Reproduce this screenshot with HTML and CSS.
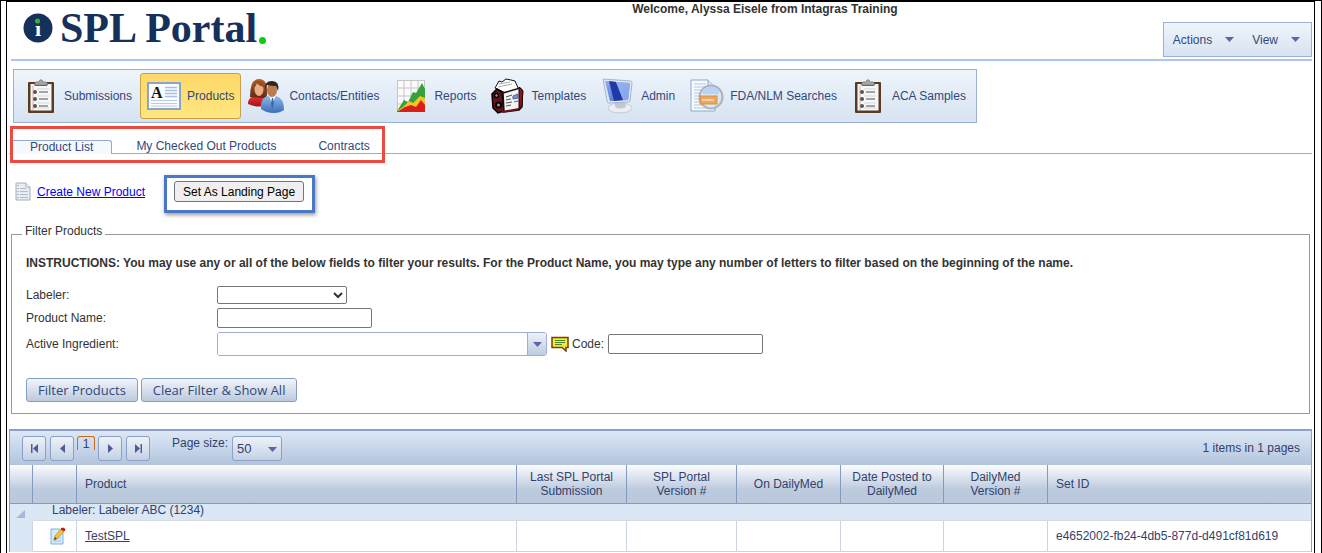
FILE: index.html
```html
<!DOCTYPE html>
<html lang="en">
<head>
<meta charset="utf-8">
<title>SPL Portal</title>
<link rel="stylesheet" href="styles.css">
</head>
<body>
<svg class="defs" aria-hidden="true">
  <defs>
    <linearGradient id="red" x2="0" y2="1"><stop offset="0" stop-color="#e33"/><stop offset="1" stop-color="#a11218"/></linearGradient>
    <linearGradient id="blue" x2="0" y2="1"><stop offset="0" stop-color="#8db8ea"/><stop offset="1" stop-color="#3a70b8"/></linearGradient>
    <linearGradient id="hair" x2="0" y2="1"><stop offset="0" stop-color="#b0622e"/><stop offset="1" stop-color="#5c2a12"/></linearGradient>
    <linearGradient id="screen" x2="1" y2="1"><stop offset="0" stop-color="#8fb0f0"/><stop offset="1" stop-color="#3d63cf"/></linearGradient>
    <symbol id="clipboard" viewBox="1 0 26 34">
      <rect x="1" y="3" width="26" height="31" rx="1" fill="#5b3b22"/>
      <rect x="3.500" y="5" width="21" height="26.500" fill="#f6f7f7"/>
      <path d="M6 7v24" stroke="#e8a8a8" stroke-width="1"/>
      <path d="M7 6l2-3h3l1-2h2l1 2h3l2 3z" fill="#a6a6a6" stroke="#888"/>
      <path d="M8 6.500h12" stroke="#666"/>
      <path d="M10 10h12M10 17h12M10 24h12M10 29h12" stroke="#d3d7dc"/>
      <path d="M12 13h9M12 20h9M12 27h9" stroke="#888" stroke-width="1.500"/>
      <g fill="#555"><circle cx="8" cy="13" r="2"/><circle cx="8" cy="20" r="2"/><circle cx="8" cy="27" r="2"/></g>
    </symbol>
  </defs>
</svg>
<div class="frame">
  <header class="header">
    <a class="logo" href="#">
      <svg width="30" height="30" viewBox="0 0 30 30" aria-hidden="true">
        <circle cx="15" cy="15" r="14.500" fill="#15305a"/>
        <text class="logo-i" x="15" y="23" text-anchor="middle">i</text>
        <circle cx="14.500" cy="8" r="3.400" fill="#15305a"/><circle cx="14.500" cy="8" r="2.500" fill="#2fb52f"/>
      </svg>
      <span class="logo-text">SPL Portal</span>
      <span class="logo-dot"></span>
    </a>
    <p class="welcome">Welcome, Alyssa Eisele from Intagras Training</p>
    <div class="menu">
      <button type="button">Actions <svg width="9" height="5" viewBox="0 0 9 5"><path d="M0 0h9L4.500 5z" fill="#5a66a6"/></svg></button>
      <button type="button">View <svg width="9" height="5" viewBox="0 0 9 5"><path d="M0 0h9L4.500 5z" fill="#5a66a6"/></svg></button>
    </div>
  </header>

  <nav class="nav">
    <a href="#"><span class="ico"><svg width="26" height="34"><use href="#clipboard"/></svg></span>Submissions</a>
    <a href="#" class="active"><span class="ico"><svg width="34" height="28" viewBox="0 0 34 28">
      <rect x="1" y="1" width="32" height="26" fill="#fbfdff" stroke="#8ba4cd" stroke-width="2"/>
      <path d="M18 5.500h12M18 8.500h12M18 11.500h12M18 14.500h12" stroke="#a9bfe0" stroke-width="1.500"/><path d="M4 18.500h26M4 21.500h26M4 24h26" stroke="#b9cae4"/>
      <text class="icon-a" x="4" y="16">A</text></svg></span>Products</a>
    <a href="#"><span class="ico"><svg width="37" height="36" viewBox="0 0 37 36">
      <path d="M1 26q0-8 9-8t11 8q-8 5-20 0z" fill="url(#red)"/>
      <path d="M3 19Q3 1 12 1t8 15q0 4-3 4z" fill="url(#hair)"/>
      <ellipse cx="12" cy="11" rx="4.500" ry="7" fill="#e9ae83"/><path d="M6 10q1-7 6-7 5 1 5 6-5-1-7-4-1 4-4 5z" fill="#9c4a20"/>
      <path d="M14 31q-1-12 8-13h7q8 2 8 14-4 3-10 3-8 0-13-4z" fill="url(#blue)"/>
      <path d="M22 18l3 8 4-8z" fill="#e7f1fc"/><path d="M25 20l-1 5 1 7 2-7-1-5z" fill="#3b69a9"/>
      <ellipse cx="25" cy="12" rx="5" ry="7" fill="#bb7b50"/>
      <path d="M18 12q-1-9 7-9 8 0 6 10l-2-5q-5 0-9-1z" fill="#33261f"/></svg></span>Contacts/Entities</a>
    <a href="#"><span class="ico"><svg width="28" height="32" viewBox="0 0 28 32">
      <rect width="28" height="32" fill="#fbfbfb"/><path d="M0 .5h28M.5 0v32M0 8h28M0 16h28M0 24h28M7 0v32M14 0v32M21 0v32M27.500 0v32" stroke="#c6c6c6"/>
      <path d="M0 31l7-11 4 2 5-10 3 1 6-10 3 6v23H0z" fill="#35a23c"/>
      <path d="M0 31l6-4 6-6 4 2 7-7 5 2v13z" fill="#f5c22d"/>
      <path d="M0 32l8-5 6-2 5 2 5-7 4 5v7z" fill="#da1f18"/></svg></span>Reports</a>
    <a href="#"><span class="ico"><svg width="33" height="36" viewBox="0 0 33 36">
      <path d="M4 10L8 3l3 1 4-3 5 1 4 1 4 9-11 4z" fill="#fff" stroke="#111"/><path d="M8 6l11-2M7 9l14-3" stroke="#aaa"/>
      <path d="M1 16l5-5 5 3 2 19-6 2-5-5z" fill="#6b1018" stroke="#000" stroke-width="1.500"/>
      <path d="M12 15l17-5 2 2v17l-3 3-15 2z" fill="#f4f4f4" stroke="#111" stroke-width="1.500"/>
      <path d="M28 9l4 4-1 14-3 5z" fill="#8a1420" stroke="#200"/>
      <path d="M15 19l6-2M15 22l5-1M15 25l6-1M15 28l5-1" stroke="#555"/><path d="M22 18l5-2v4l-5 1zM23 24l4-1" fill="#8791d6" stroke="#535ca8"/>
      <circle cx="5.500" cy="17.500" r="2" fill="#999" stroke="#000" stroke-width="1.500"/><circle cx="7.500" cy="27" r="2.500" fill="#999" stroke="#000" stroke-width="2"/>
      <path d="M11 34l17-3" stroke="#6b1018" stroke-width="2"/></svg></span>Templates</a>
    <a href="#"><span class="ico"><svg width="32" height="36" viewBox="0 0 32 36">
      <ellipse cx="18" cy="30" rx="12" ry="5" fill="#eceff2" stroke="#c3c9d1"/><path d="M13 22h10l1 7q-6 3-11 0z" fill="#c2c8d0"/>
      <path d="M1 1l28 2q1 0 1 2l-2 18-1 1L7 25q-2 0-2-2z" fill="#dfe7f2" stroke="#a8b5cb"/>
      <path d="M3 3l25 2-2 17-18 1z" fill="url(#screen)"/><path d="M7 3l7 1 7 18-9 1z" fill="#2139a8"/><path d="M14 4l14 1-2 17h-5z" fill="#a3bdf2" opacity=".7"/></svg></span>Admin</a>
    <a href="#"><span class="ico"><svg width="34" height="34" viewBox="0 0 34 34">
      <path d="M1 1h17l7 7v24H1z" fill="#f6f9fd" stroke="#8fa6c9"/><path d="M18 1v7h7" fill="#dbe6f4" stroke="#8fa6c9"/>
      <path d="M4 5h12M4 8h12M4 11h8M4 14h6M4 17h5M4 20h5M4 23h6M4 26h10M4 29h16" stroke="#b7c7de"/>
      <circle cx="21" cy="18" r="11.500" fill="#d5e5f5" fill-opacity=".8" stroke="#a9b3bf" stroke-width="2"/>
      <path d="M13 11q8-7 16 0v4H12z" fill="#b9d3f1"/>
      <rect x="10" y="17" width="17" height="8" fill="#f0a55c" stroke="#d98f48"/><path d="M12 21h12" stroke="#fbd6a9" stroke-width="2"/></svg></span>FDA/NLM Searches</a>
    <a href="#"><span class="ico"><svg width="26" height="34"><use href="#clipboard"/></svg></span>ACA Samples</a>
  </nav>

  <div class="tabs">
    <a href="#" class="tab active">Product List</a>
    <a href="#" class="tab">My Checked Out Products</a>
    <a href="#" class="tab">Contracts</a>
    <span class="callout"></span>
  </div>

  <div class="actions">
    <a class="create" href="#"><svg width="16" height="20" viewBox="0 0 16 20" aria-hidden="true"><path d="M1 1h10l4 4v13H1z" fill="#e7edf2" stroke="#a8adb2"/><path d="M11 1v4h4" fill="#fff" stroke="#a8adb2"/><path d="M5 6.500h6M5 9.500h8M5 12.500h8M5 15.500h8" stroke="#a9c0d8"/><path d="M3 3v15" stroke="#888" stroke-dasharray="1 2"/></svg><span>Create New Product</span></a>
    <span class="landing"><button type="button">Set As Landing Page</button></span>
  </div>

  <fieldset class="filter">
    <legend>Filter Products</legend>
    <p class="instructions">INSTRUCTIONS: You may use any or all of the below fields to filter your results. For the Product Name, you may type any number of letters to filter based on the beginning of the name.</p>
    <div class="fields">
      <label for="labeler">Labeler:</label>
      <div><select id="labeler" class="labeler"><option></option></select></div>
      <label for="pname">Product Name:</label>
      <div><input id="pname" class="box" type="text"></div>
      <label for="ingredient">Active Ingredient:</label>
      <div class="line">
        <span class="combo"><input id="ingredient" type="text"><button type="button" aria-label="Open list"><svg width="9" height="5" viewBox="0 0 9 5"><path d="M0 0h9L4.500 5z" fill="#5a66a6"/></svg></button></span>
        <svg class="note" width="18" height="16" viewBox="0 0 18 16" aria-hidden="true"><path d="M1 1.500h16v10h-2v3.500l-4-3.500H1z" fill="#ffe62e" stroke="#70400c" stroke-width="1.500"/><path d="M4 4.500h10M4 6.500h10M4 8.500h7" stroke="#4a8c2a"/></svg>
        <label for="code">Code:</label>
        <input id="code" class="box" type="text">
      </div>
    </div>
    <div class="buttons"><button type="button">Filter Products</button><button type="button">Clear Filter &amp; Show All</button></div>
  </fieldset>

  <section class="grid">
    <div class="pager">
      <button type="button" aria-label="First page"><svg width="9" height="9" viewBox="0 0 9 9"><path d="M1 0h1.500v9H1zM8 0v9L3 4.500z" fill="#4d5c99"/></svg></button>
      <button type="button" aria-label="Previous page"><svg width="9" height="9" viewBox="0 0 9 9"><path d="M7 0v9L2 4.500z" fill="#4d5c99"/></svg></button>
      <a class="current" href="#">1</a>
      <button type="button" aria-label="Next page"><svg width="9" height="9" viewBox="0 0 9 9"><path d="M2 0v9l5-4.500z" fill="#4d5c99"/></svg></button>
      <button type="button" aria-label="Last page"><svg width="9" height="9" viewBox="0 0 9 9"><path d="M1 0v9l5-4.500zM6.500 0H8v9H6.500z" fill="#4d5c99"/></svg></button>
      <label for="size">Page size:</label>
      <span class="size"><select id="size"><option>50</option></select><svg width="9" height="5" viewBox="0 0 9 5"><path d="M0 0h9L4.500 5z" fill="#5a66a6"/></svg></span>
      <span class="count">1 items in 1 pages</span>
    </div>
    <table>
      <colgroup><col class="c-expand"><col class="c-edit"><col><col class="c-wide"><col class="c-wide"><col class="c-mid"><col class="c-date"><col class="c-mid"><col class="c-id"></colgroup>
      <thead><tr><th></th><th></th><th class="left">Product</th><th>Last SPL Portal Submission</th><th>SPL Portal<br>Version #</th><th>On DailyMed</th><th>Date Posted to DailyMed</th><th>DailyMed<br>Version #</th><th class="left">Set ID</th></tr></thead>
      <tbody>
        <tr class="group"><td class="expand"><svg width="9" height="8" viewBox="0 0 9 8"><path d="M9 0v8H0z" fill="#a9b6d6"/></svg></td><td colspan="8">Labeler: Labeler ABC (1234)</td></tr>
        <tr class="row"><td class="expand"></td><td class="edit"><svg width="17" height="18" viewBox="0 0 17 18"><path d="M2 2h9l3 3v12H2z" fill="#d4e9fb" stroke="#7fb2e4"/><path d="M4 14h8M8 11h4" stroke="#9cc6ee"/><path d="M5 13l1-4 6-7 3 2-6 7z" fill="#f7c52e" stroke="#c98d17" stroke-width=".8"/><path d="M5 13l1-3 2 2z" fill="#444"/><path d="M12 2l1-1q3 0 3 2l-1 1z" fill="#d22" stroke="#b11"/></svg></td><td><a href="#">TestSPL</a></td><td></td><td></td><td></td><td></td><td></td><td>e4652002-fb24-4db5-877d-d491cf81d619</td></tr>
      </tbody>
    </table>
  </section>
</div>
</body>
</html>
```

FILE: styles.css
```css
* { box-sizing: border-box; }
body {
  margin: 0;
  min-height: 100vh;
  display: flex;
  border: 1px solid #000;
  border-bottom: 0;
  padding: 0 6px 0 5px;
  background: #fff;
  color: #333;
  font: 12px/14px "Liberation Sans", Arial, sans-serif;
}
button, input, select { font: inherit; color: inherit; margin: 0; }
p { margin: 0; }
svg { display: block; flex: none; }
.defs { position: absolute; width: 0; height: 0; }
.frame { flex: 1; min-width: 0; border: 1px solid #000; border-bottom: 0; }

.header {
  display: grid;
  grid-template-columns: 356px 1fr auto;
  align-items: start;
  height: 59px;
  margin: 0 2px 0 4px;
  border-bottom: 2px solid #a9c5f7;
}
.logo { display: flex; align-items: center; height: 52px; padding-left: 12px; color: #15305a; text-decoration: none; }
.logo-i { font: bold 22px "Liberation Serif", serif; fill: #fff; }
.logo-text { margin-left: 7px; font: bold 42px/52px "Liberation Serif", serif; }
.logo-dot { width: 7px; height: 7px; margin: 25px 0 0 2px; border-radius: 50%; background: #12c912; }
.welcome { text-align: center; font-weight: bold; }
.menu, .nav {
  border: 1px solid #9ab0d6;
  background: linear-gradient(#eef5fc, #d7e3f2);
  color: #33477a;
}
.menu { display: flex; height: 35px; margin-top: 20px; padding: 0 11px 0 9px; gap: 18px; }
.menu button { display: flex; align-items: center; gap: 13px; padding: 0; border: 0; background: none; }

.nav { display: flex; width: fit-content; gap: 1px; margin: 8px 6px 0; padding: 3px; }
.nav a {
  display: flex;
  align-items: center;
  gap: 7px;
  height: 46px;
  padding: 0 6px;
  border: 1px solid transparent;
  border-radius: 3px;
  color: inherit;
  text-decoration: none;
  white-space: nowrap;
}
.nav .active { border-color: #c9a046; background: linear-gradient(#ffd869, #ffe680); }
.ico { display: flex; justify-content: center; width: 33px; }
.icon-a { font: bold 16px "Liberation Serif", serif; fill: #111; }

.tabs { position: relative; display: flex; margin: 17px 2px 0; padding-left: 4px; border-bottom: 1px solid #9badc6; line-height: 13px; }
.tab { padding: 0 21px; color: #33477a; text-decoration: none; }
.tab.active {
  height: 14px;
  margin: 0 3px -1px 0;
  padding: 0 18px 0 17px;
  border: 1px solid #93abcf;
  border-width: 1px 1px 0 0;
  border-radius: 0 3px 0 0;
  background: #f5f9fe;
}
.callout { position: absolute; left: 1px; top: -14px; width: 375px; height: 37px; border: 3px solid #ed4b42; }

.actions { display: flex; align-items: flex-start; gap: 19px; margin: 21px 8px 0; }
.create { display: flex; align-items: center; gap: 6px; height: 34px; color: #00f; }
.landing { padding: 3px 8px 8px 7px; border: 3px solid #4a78c6; box-shadow: 1px 2px 4px #999; }
.landing button { display: block; height: 21px; padding: 0 8px; border: 1px solid #767676; border-radius: 3px; background: #efefef; color: #000; }

.filter { margin: 12px 4px 0; padding: 13px 14px 11px; border: 1px solid #999; min-width: 0; }
.filter legend { margin-left: -4px; padding: 0 3px 6px; line-height: 12px; }
.instructions { font-weight: bold; }
.fields { display: grid; grid-template-columns: 191px 1fr; gap: 4px 0; align-items: center; margin-top: 16px; }
.fields select, .fields input { display: block; }
.labeler { width: 130px; height: 18px; border: 1px solid #767676; border-radius: 2px; background-color: #fff; }
.box { width: 155px; height: 20px; border: 1px solid #767676; border-radius: 2px; }
.line { display: flex; align-items: center; gap: 4px; }
.line label { margin-left: -1px; }
.combo { display: flex; width: 330px; height: 24px; border: 1px solid #9bb0d4; border-radius: 3px; overflow: hidden; }
.combo input { flex: 1; min-width: 0; border: 0; }
.combo button {
  display: grid;
  place-items: center;
  width: 19px;
  padding: 0;
  border: 0;
  border-left: 1px solid #9bb0d4;
  background: linear-gradient(#eef2f8, #bccbe2);
}
.buttons { display: flex; gap: 3px; margin-top: 22px; }
.buttons button {
  height: 24px;
  padding: 0 11px;
  border: 1px solid #869dc3;
  border-radius: 3px;
  background: linear-gradient(#f2f5f9, #bccade);
  color: #33477a;
  font: 13px "Open Sans", sans-serif;
}

.grid { margin: 15px 2px 0; border: 1px solid #8ba0c4; border-width: 2px 1px 0; color: #33416c; }
.pager { display: flex; align-items: flex-start; height: 34px; gap: 4px; padding: 5px 11px 0 12px; background: linear-gradient(#dce8f6, #b2c4dc); }
.pager button, .size select {
  display: grid;
  place-items: center;
  width: 24px;
  height: 25px;
  padding: 0;
  border: 1px solid #8ba1c6;
  border-radius: 3px;
  background: linear-gradient(#edf2f8, #c4d1e4);
}
.current { width: 18px; height: 14px; margin: 0 -1px; border: 1px solid #d2691e; border-bottom: 0; border-radius: 3px 3px 0 0; color: inherit; text-align: center; text-decoration: none; line-height: 14px; }
.pager label { margin-left: 18px; }
.size { position: relative; }
.size select { width: 50px; padding-left: 4px; appearance: none; font-size: 13px; }
.size svg { position: absolute; right: 5px; top: 11px; pointer-events: none; }
.count { margin-left: auto; line-height: 24px; }

table { width: 100%; table-layout: fixed; border-collapse: separate; border-spacing: 0; }
.c-expand { width: 23px; }
.c-edit { width: 44px; }
.c-wide { width: 110px; }
.c-mid { width: 104px; }
.c-date { width: 103px; }
.c-id { width: 263px; }
th, td { padding: 0 8px; }
th { height: 39px; border: 1px solid #8399c0; border-width: 0 1px 1px 0; background: linear-gradient(#fbfcfe, #bccadd 65%, #bac9dc); font-weight: normal; }
th:last-child { border-right: 0; }
.left { text-align: left; }
.group td { height: 17px; background: #dae7f5; border-bottom: 1px solid #d5dbe3; line-height: 12px; vertical-align: top; }
.group td + td { padding-left: 19px; }
.group .expand { padding: 6px 0 0 6px; }
.group td.expand, .row td.expand { border-bottom-color: #dae7f5; background: #dae7f5; }
.row td { height: 31px; border: 1px solid #ccd3e6; border-width: 0 1px 1px 0; }
.row td:last-child { border-right: 0; }
.row .edit { padding: 0 16px; }
.row a { color: inherit; }
```
